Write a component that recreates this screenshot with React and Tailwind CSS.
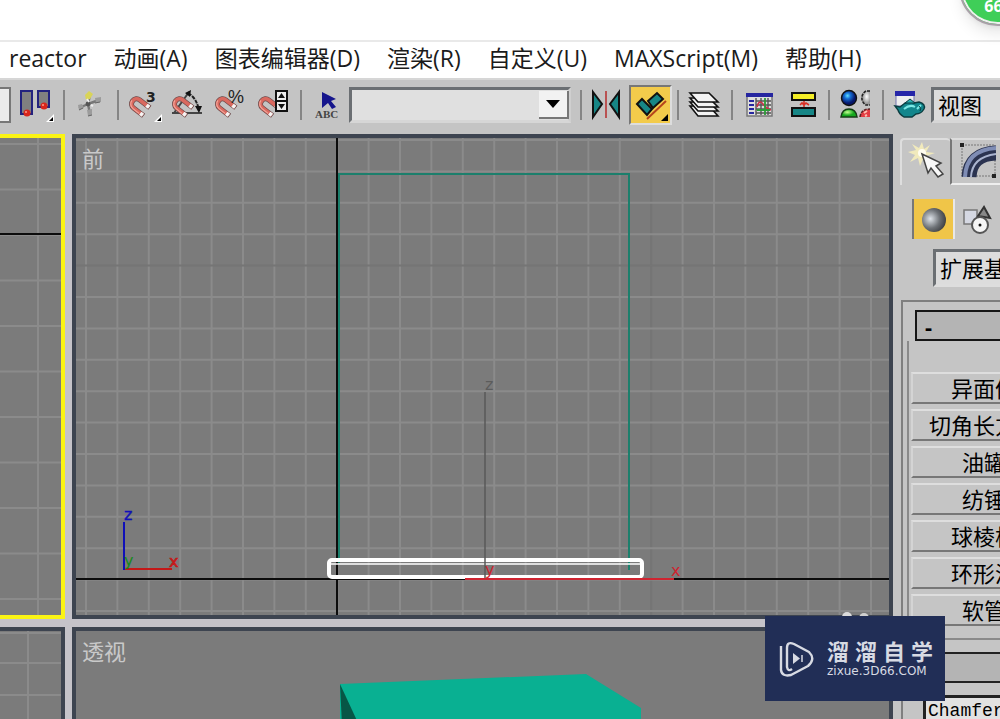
import React from 'react';

const menus = ['reactor', '动画(A)', '图表编辑器(D)', '渲染(R)', '自定义(U)', 'MAXScript(M)', '帮助(H)'];
const primitives = ['异面体', '切角长方体', '油罐', '纺锤', '球棱柱', '环形波', '软管'];

const Icon = ({ children }) => (
    <svg viewBox="0 0 36 36" className="size-9 shrink-0" aria-hidden="true">{children}</svg>
);

const Corner = () => (
    <>
        <path d="M35 27v8h-8z" fill="#fff" />
        <path d="M34 30v4h-4z" fill="#000" />
    </>
);

const Magnet = () => (
    <g transform="translate(11 18) rotate(-52) scale(.85)" fill="none">
        <path d="M-6 13V-2a6 6 0 0 1 12 0V13" stroke="#6b4a4a" strokeWidth="6" />
        <path d="M-6 12V-2a6 6 0 0 1 12 0V12" stroke="#d9695f" strokeWidth="4.4" />
        <path d="M-7 7V-2a7 7 0 0 1 7 -7" stroke="#f3a79c" strokeWidth="1.4" />
        <path d="M-6 8V12M6 8V12" stroke="#f4f4f4" strokeWidth="4.4" />
    </g>
);

const AlignColumnsIcon = () => (
    <Icon>
        <rect x="2" y="4" width="11" height="23" fill="#808080" stroke="#22227e" strokeWidth="2" />
        <rect x="19" y="4" width="11" height="16" fill="#808080" stroke="#22227e" strokeWidth="2" />
        <circle cx="8" cy="26" r="3.5" fill="#d8261c" />
        <circle cx="25" cy="19" r="3.5" fill="#d8261c" />
        <circle cx="7" cy="25" r="1" fill="#ff9a8a" />
        <circle cx="24" cy="18" r="1" fill="#ff9a8a" />
        <Corner />
    </Icon>
);

const ManipulateIcon = () => (
    <Icon>
        <path d="M15 17L17 8M15 17L26 13M15 17L6 21M15 17L17 27" stroke="#777" strokeWidth="2.4" />
        <path d="M12 8l4-4 4 3-3 5-4 1z" fill="#d9d458" />
        <path d="M22 11l6-1v5l-5 1zM5 18l4-1 2 4-5 2zM14 23l5-1v6l-4 1z" fill="#9c9c9c" />
        <path d="M22 16l5-1M6 23l4-2M15 29l4-1" stroke="#666" />
        <circle cx="15" cy="17" r="2.4" fill="#555" />
        <path d="M14 12l2 3M18 18l2 1" stroke="#eee" strokeWidth="2" />
    </Icon>
);

const SnapIcon = () => (
    <Icon>
        <Magnet />
        <text x="19" y="15" fontSize="14" className="font-['DejaVu_Sans',sans-serif] font-bold" fill="#222">3</text>
        <Corner />
    </Icon>
);

const AngleSnapIcon = () => (
    <Icon>
        <path d="M2 26H32M4 26L19 5" stroke="#444" strokeWidth="2" fill="none" />
        <path d="M18 6Q27 11 29 24" stroke="#222" strokeWidth="2" strokeDasharray="4 1" fill="none" />
        <path d="M15 6l6-3-1 7zM25 19h7l-3 7z" fill="#111" />
        <Magnet />
    </Icon>
);

const PercentSnapIcon = () => (
    <Icon>
        <Magnet />
        <text x="15" y="16" fontSize="18" className="font-['Liberation_Sans',sans-serif]" fill="#222">%</text>
    </Icon>
);

const SpinnerSnapIcon = () => (
    <Icon>
        <Magnet />
        <rect x="20" y="4" width="11" height="10" fill="#eee" stroke="#111" strokeWidth="2" />
        <rect x="20" y="14" width="11" height="10" fill="#eee" stroke="#111" strokeWidth="2" />
        <path d="M22 11h7l-3.5-5zM22 17h7l-3.5 5z" fill="#111" />
    </Icon>
);

const NamedSetIcon = () => (
    <Icon>
        <path d="M12 5L26 12L21 14L26 20L22 22L18 16L12 21z" fill="#15158c" />
        <text x="5" y="31" fontSize="11" className="font-['Liberation_Serif',serif] font-bold" fill="#444">ABC</text>
    </Icon>
);

const MirrorIcon = () => (
    <Icon>
        <path d="M3 5L12 17L3 30z" fill="#178686" stroke="#111" strokeWidth="2" />
        <path d="M29 5L20 17L29 30z" fill="#178686" stroke="#111" strokeWidth="2" />
        <path d="M16 4V31" stroke="#b95252" strokeWidth="2" />
    </Icon>
);

const AlignIcon = () => (
    <Icon>
        <path d="M4 17L9 12L19 22L14 28z" fill="#178686" stroke="#111" strokeWidth="2" />
        <path d="M15 14L24 6L30 12L20 21z" fill="#178686" stroke="#111" strokeWidth="2" />
        <path d="M14 32L33 14" stroke="#b5441c" strokeWidth="2" />
        <path d="M35 27v7h-7z" fill="#000" />
    </Icon>
);

const LayersIcon = () => (
    <Icon>
        <g fill="#f4f4f4" stroke="#111" strokeWidth="1.6">
            <path d="M3 19L11 29H31L22 19z" />
            <path d="M3 15L11 24H31L22 15z" />
            <path d="M3 11L11 20H31L22 11z" />
            <path d="M3 6L11 15H31L22 6z" />
        </g>
    </Icon>
);

const CurveEditorIcon = () => (
    <Icon>
        <rect x="6" y="7" width="25" height="22" fill="#dedede" stroke="#777" strokeWidth="1.5" />
        <rect x="5" y="6" width="27" height="4" fill="#2626a0" />
        <path d="M8 14h5M8 18h5M8 22h5M8 26h5" stroke="#2626a0" strokeWidth="2" />
        <path d="M15 11V28M15 14H30M15 18H30M15 22H30M15 26H30M20 11V28M27 11V28" stroke="#555" strokeWidth="1.4" />
        <path d="M16 20Q18 12 22 17T30 23" stroke="#cc3048" strokeWidth="1.5" fill="none" />
        <path d="M24 11V28M16 23H29" stroke="#2d9b39" strokeWidth="1.8" />
    </Icon>
);

const SchematicIcon = () => (
    <Icon>
        <rect x="8" y="6" width="23" height="7" fill="#f4ee26" stroke="#111" strokeWidth="2" />
        <rect x="8" y="21" width="23" height="8" fill="#178686" stroke="#111" strokeWidth="2" />
        <path d="M20 14V20M16 18l2-2 2 2 2-2 3 2" stroke="#d93025" strokeWidth="1.6" fill="none" />
    </Icon>
);

const MaterialIcon = () => (
    <Icon>
        <defs>
            <radialGradient id="blueBall" cx=".4" cy=".35"><stop offset="0" stopColor="#5fe0ff" /><stop offset=".4" stopColor="#1670d6" /><stop offset="1" stopColor="#06166a" /></radialGradient>
            <radialGradient id="grayBall" cx=".6" cy=".4"><stop offset="0" stopColor="#fff" /><stop offset="1" stopColor="#999" /></radialGradient>
            <radialGradient id="greenBall" cx=".4" cy=".4"><stop offset="0" stopColor="#c5ff90" /><stop offset=".8" stopColor="#15a81d" /></radialGradient>
        </defs>
        <circle cx="11" cy="11" r="7.5" fill="url(#blueBall)" stroke="#111" strokeWidth="1.4" />
        <path d="M32 4h-4a8 8 0 0 0 0 14h4z" fill="url(#grayBall)" />
        <path d="M32 4h-4a8 8 0 0 0 0 14h4" fill="none" stroke="#222" strokeWidth="1.6" strokeDasharray="3 1" />
        <path d="M3 30q1-8 8-8t8 8z" fill="url(#greenBall)" stroke="#143d14" strokeWidth="1.5" />
        <path d="M22 30q1-8 10-8v8z" fill="#e23c43" />
        <path d="M22 30q1-8 10-8" fill="none" stroke="#5b2222" strokeWidth="1.5" strokeDasharray="3 1" />
        <path d="M26 26l3-2M27 29l2-1" stroke="#ffc0b0" strokeWidth="2" />
    </Icon>
);

const TeapotIcon = () => (
    <Icon>
        <rect x="4" y="5" width="18" height="14" fill="#eee" stroke="#7777b0" />
        <rect x="3" y="4" width="20" height="5" fill="#2626a8" />
        <path d="M3 19l5 1 5-4q5-2 9 0l5-1q7 2 5 7-3 5-8 5l-4 3h-8q-5-3-6-7z" fill="#12868c" stroke="#0b3d40" strokeWidth="1.4" />
        <path d="M13 16l5-4 5 4z" fill="#2aaeb1" stroke="#0b3d40" />
        <path d="M12 22q6-5 11-2M25 22l4-4" stroke="#7de9e6" strokeWidth="2" fill="none" />
        <path d="M27 19q3 2 1 5" stroke="#0b3d40" fill="none" />
    </Icon>
);

const ToolButton = ({ label, active, children }) => (
    <button
        aria-label={label}
        className={active
            ? 'w-[43px] h-10 flex shrink-0 items-center justify-center bg-[#f3cb4b] border-2 border-t-[#777] border-l-[#777] border-b-[#ddd] border-r-[#ddd]'
            : 'w-[43px] h-10 flex shrink-0 items-center justify-center'}
    >
        {children}
    </button>
);

const Separator = () => (
    <div className="w-[11px] shrink-0 flex justify-center">
        <div className="w-[2px] h-[30px] bg-[#858585]" />
    </div>
);

const Toolbar = () => (
    <div className="h-14 shrink-0 flex items-center pb-1 bg-[#c4c4c4] border-t-2 border-[#d6d6d6] overflow-hidden">
        <div className="w-[11px] h-9 mr-1 shrink-0 bg-[#ececec] border-2 border-l-0 border-[#777]" />
        <ToolButton label="对齐列"><AlignColumnsIcon /></ToolButton>
        <Separator />
        <ToolButton label="操纵"><ManipulateIcon /></ToolButton>
        <Separator />
        <ToolButton label="捕捉开关"><SnapIcon /></ToolButton>
        <ToolButton label="角度捕捉"><AngleSnapIcon /></ToolButton>
        <ToolButton label="百分比捕捉"><PercentSnapIcon /></ToolButton>
        <ToolButton label="微调器捕捉"><SpinnerSnapIcon /></ToolButton>
        <Separator />
        <ToolButton label="命名选择集"><NamedSetIcon /></ToolButton>
        <div className="relative w-[222px] h-9 mr-1 shrink-0">
            <select aria-label="选择集" className="w-full h-full appearance-none bg-[#e0e0e0] border-3 border-t-[#6b6f73] border-l-[#6b6f73] border-r-[#cfcfcf] border-b-[#d6d6d6]" />
            <div className="pointer-events-none absolute right-0.5 top-1 w-[30px] h-7 flex items-center justify-center bg-[#f2f2f2] border-b-2 border-r-2 border-[#777]">
                <svg viewBox="0 0 14 8" className="w-3.5 h-2"><path d="M0 0H14L7 8z" fill="#000" /></svg>
            </div>
        </div>
        <Separator />
        <ToolButton label="镜像"><MirrorIcon /></ToolButton>
        <ToolButton label="对齐" active><AlignIcon /></ToolButton>
        <Separator />
        <ToolButton label="层管理器"><LayersIcon /></ToolButton>
        <Separator />
        <ToolButton label="曲线编辑器"><CurveEditorIcon /></ToolButton>
        <ToolButton label="图解视图"><SchematicIcon /></ToolButton>
        <Separator />
        <ToolButton label="材质编辑器"><MaterialIcon /></ToolButton>
        <Separator />
        <ToolButton label="渲染场景"><TeapotIcon /></ToolButton>
        <select aria-label="渲染类型" className="w-32 h-9 shrink-0 appearance-none pl-1 text-[22px] leading-7 text-black bg-[#dcdcdc] border-3 border-t-[#6b6f73] border-l-[#6b6f73] border-r-[#999] border-b-[#d6d6d6]">
            <option>视图</option>
        </select>
    </div>
);

const cols = Array.from({ length: 26 }, (_, i) => 10 + i * 31.4);
const rows = Array.from({ length: 16 }, (_, i) => 2 + i * 31.4);
const leftRows = Array.from({ length: 11 }, (_, i) => 6 + i * 45.5);

const LeftView = () => (
    <div className="relative overflow-hidden bg-[#7b7b7b] border-4 border-l-0 border-[#fbf413]">
        <svg className="absolute inset-0 size-full" stroke="#8b8b8b" strokeWidth="2">
            <path d="M38 0V485" />
            {leftRows.map(y => <path key={y} d={`M0 ${y}H64`} />)}
            <path d="M0 96H64" stroke="#0c0c0c" />
        </svg>
    </div>
);

const FrontView = () => (
    <div className="relative overflow-hidden bg-[#7b7b7b] border-4 border-[#3d4450]">
        <svg className="absolute inset-0 size-full" fill="none">
            <g strokeWidth="2">
                {cols.map((x, i) => <path key={x} d={`M${x} 0V485`} stroke={i === 18 ? '#757575' : '#8b8b8b'} />)}
                {rows.map((y, i) => <path key={y} d={`M0 ${y}H900`} stroke={i === 4 ? '#757575' : '#8b8b8b'} />)}
            </g>
            <path d="M261 0V485M0 441H900" stroke="#0c0c0c" strokeWidth="2" />
            <path d="M263 425V36H553V432" stroke="#1c7f6c" strokeWidth="2" />
            <rect x="253" y="422" width="313" height="17" rx="3" stroke="#fff" strokeWidth="4" />
            <path d="M254 426H566" stroke="#fff" strokeWidth="1.5" />
            <path d="M409 254V440" stroke="#595959" strokeWidth="1.5" />
            <path d="M389 441H598" stroke="#cf2430" strokeWidth="2" />
            <path d="M48 432V384" stroke="#1010b8" strokeWidth="2" />
            <path d="M49 431H96" stroke="#c41818" strokeWidth="2" />
            <g fontSize="16" className="font-['DejaVu_Sans',sans-serif]">
                <text x="409" y="252" fill="#5c5c5c">z</text>
                <text x="409" y="437" fill="#cf2430">y</text>
                <text x="595" y="438" fill="#cf2430">x</text>
                <text x="48" y="382" fill="#1010b8" stroke="#1010b8" strokeWidth=".4">z</text>
                <text x="48" y="428" fill="#178a1d">y</text>
                <text x="93" y="429" fill="#c41818" stroke="#c41818" strokeWidth=".6">x</text>
            </g>
        </svg>
        <span className="relative block pl-1.5 pt-1.5 text-[22px] leading-7 text-[#c9c9c9]">前</span>
    </div>
);

const Viewports = () => (
    <div className="flex-1 min-w-0 grid grid-cols-[65px_1fr] grid-rows-[485px_1fr] gap-x-[7px] gap-y-2 bg-[#c5c3c9]">
        <LeftView />
        <FrontView />
        <div className="relative overflow-hidden bg-[#7b7b7b] border-4 border-l-0 border-b-0 border-[#3d4450]">
            <svg className="absolute inset-0 size-full" stroke="#8b8b8b" strokeWidth="2">
                <path d="M28 0V100M0 2H64M0 32H64M0 64H64" />
            </svg>
        </div>
        <div className="relative overflow-hidden bg-[#7b7b7b] border-4 border-b-0 border-[#3d4450]">
            <svg className="absolute inset-0 size-full">
                <path d="M264 53L510 43L565 77V100H264z" fill="#09b092" />
                <path d="M264 53L283 94H266z" fill="#075646" />
            </svg>
            <span className="relative block pl-1.5 pt-1.5 text-[22px] leading-7 text-[#c9c9c9]">透视</span>
        </div>
    </div>
);

const CreateTabIcon = () => (
    <svg viewBox="0 0 40 44" className="w-10 h-11" aria-hidden="true">
        <path d="M14 1l2 7 6-4-4 7 9 1-9 3 4 8-7-5-3 7-2-8-8 4 5-7-7-3 8-2-4-6 7 4z" fill="#f1eabc" />
        <circle cx="14" cy="12" r="4" fill="#fffdf0" />
        <path d="M14 13L20 32L23 27L30 36L35 33L28 25L33 22z" fill="#f8f8f8" stroke="#444" strokeWidth="1.5" />
    </svg>
);

const ModifyTabIcon = () => (
    <svg viewBox="0 0 40 44" className="w-10 h-11 shrink-0" aria-hidden="true">
        <rect x="6" y="5" width="33" height="31" fill="none" stroke="#777" strokeWidth="1" strokeDasharray="2 1" />
        <path d="M13 37Q14 14 40 13" fill="none" stroke="#2b3350" strokeWidth="15" />
        <path d="M9 37Q10 10 40 8" fill="none" stroke="#7f8db5" strokeWidth="4" />
        <path d="M15 37Q16 17 40 14" fill="none" stroke="#aab4cf" strokeWidth="2" />
        <path d="M4 3h4v4h-4zM36 34h4v4h-4z" fill="#222" />
    </svg>
);

const CommandPanel = () => (
    <aside className="w-[107px] shrink-0 overflow-hidden bg-[#c5c5c5]">
        <div className="w-[180px] pl-[7px]">
            <div className="flex h-[51px] pt-1">
                <button aria-label="创建" className="w-[50px] flex items-center justify-center pl-1 border-l-2 border-t-2 border-[#dedede] rounded-t">
                    <CreateTabIcon />
                </button>
                <button aria-label="修改" className="flex-1 flex items-center pl-1 border-l-2 border-l-[#777] border-t-2 border-t-[#ddd] border-b-2 border-b-[#eee]">
                    <ModifyTabIcon />
                </button>
            </div>
            <div className="flex gap-1 pl-3 pt-3.5">
                <button aria-label="几何体" className="w-[43px] h-10 flex items-center justify-center bg-[#f0c548] border-l-2 border-r-2 border-l-[#777] border-r-[#e8e8e8]">
                    <svg viewBox="0 0 26 26" className="size-[26px]">
                        <defs>
                            <radialGradient id="sphere" cx=".35" cy=".45" r=".65"><stop offset="0" stopColor="#dfe4ea" /><stop offset=".6" stopColor="#6d7176" /><stop offset="1" stopColor="#3f4144" /></radialGradient>
                        </defs>
                        <circle cx="13" cy="14" r="12" fill="url(#sphere)" />
                    </svg>
                </button>
                <button aria-label="图形" className="w-9 h-10 flex items-center justify-center">
                    <svg viewBox="0 0 32 32" className="size-8">
                        <rect x="3" y="7" width="13" height="14" fill="#d5d8e2" stroke="#777" strokeWidth="1.5" />
                        <path d="M17 13L23 4L29 15z" fill="#888" stroke="#333" strokeWidth="2" />
                        <circle cx="19" cy="22" r="8" fill="#f5f5f5" stroke="#555" strokeWidth="2" />
                        <circle cx="19" cy="22" r="1.5" fill="#111" />
                    </svg>
                </button>
            </div>
            <div className="pl-[33px] pt-2.5">
                <select aria-label="类别" className="w-40 h-[38px] block appearance-none pl-1 text-[22px] leading-7 text-black bg-[#dcdcdc] border-3 border-t-[#6b6f73] border-l-[#6b6f73] border-[#ddd]">
                    <option>扩展基</option>
                </select>
            </div>
        </div>
        <div className="ml-2 mt-[13px] w-[180px] border-l-2 border-t-2 border-[#7f7f7f] pl-1 pt-2">
            <button className="ml-2 w-[160px] h-[31px] flex items-center pl-2 bg-[#b4b4b4] border-2 border-[#161616] text-[22px] leading-7 font-bold text-black">-</button>
            <div className="border-l-2 border-[#8a8a8a] pl-0.5 pt-[31px] pb-3">
                {primitives.map(name => (
                    <button
                        key={name}
                        className="w-[144px] h-8 mb-[5px] last:mb-0 flex items-center justify-center text-[22px] leading-7 text-black border-t-2 border-l-2 border-t-[#dedede] border-l-[#d4d4d4] border-b-2 border-b-[#777]"
                    >
                        {name}
                    </button>
                ))}
            </div>
            <div className="h-3.5 border-t-2 border-[#8a8a8a]" />
            <div className="ml-2 h-[31px] bg-[#b4b4b4] border-2 border-[#222]" />
            <input
                aria-label="名称"
                defaultValue="Chamfer"
                className="ml-4 mt-3 w-36 h-8 pl-0.5 bg-[#e2e2e2] border-3 border-[#222] text-[18px] font-['Liberation_Mono',monospace] text-black"
            />
        </div>
    </aside>
);

const Watermark = () => (
    <div className="absolute left-[765px] top-[616px] w-[180px] h-[85px] flex items-center gap-3 pl-3.5 bg-[#212e56] text-[#d7dae3]">
        <svg viewBox="0 0 36 36" className="size-9 shrink-0" fill="none" stroke="#d7dae3" strokeWidth="2.4">
            <path d="M2 5V29Q3 36 12 34L29 25Q37 18 30 11L15 3Q8 0 8 7V26Q9 31 13 28" strokeLinejoin="round" />
            <path d="M14 12V23L21 17.5z" fill="#d7dae3" stroke="none" />
            <path d="M23 14V21" strokeWidth="1.5" />
        </svg>
        <div>
            <div className="flex gap-1.5 text-[22px] leading-6 font-bold">
                {['溜', '溜', '自', '学'].map((c, i) => <span key={i}>{c}</span>)}
            </div>
            <div className="text-[12px] leading-4 font-['DejaVu_Sans',sans-serif]">zixue.3D66.COM</div>
        </div>
    </div>
);

const App = () => (
    <div className="relative h-screen flex flex-col overflow-hidden bg-white font-['Open_Sans','Noto_Sans_CJK_SC',sans-serif]">
        <header className="h-[42px] shrink-0 border-b-2 border-[#e9e9e9]">
            <div className="absolute -top-[51px] -right-9 size-[77px] rounded-full bg-[#3fce58] border-2 border-[#a9a0a8] ring-inset ring-2 ring-[#f0f0f0] shadow-lg flex items-end justify-center pb-2">
                <span className="pr-2 text-[16px] leading-5 font-bold text-white">66</span>
            </div>
        </header>
        <nav className="h-9 shrink-0 flex items-center gap-[27px] pb-1 pl-[9px] text-[23px] leading-8 text-[#1b1b1b] whitespace-nowrap">
            {menus.map(item => <button key={item}>{item}</button>)}
        </nav>
        <Toolbar />
        <main className="flex-1 min-h-0 flex">
            <Viewports />
            <CommandPanel />
        </main>
        <div className="absolute left-[842px] top-[612px] size-2.5 rounded-full bg-[#dcdcdc]" />
        <div className="absolute left-[859px] top-[613px] size-2.5 rounded-full bg-[#d0d0d0]" />
        <Watermark />
    </div>
);

export default App;
